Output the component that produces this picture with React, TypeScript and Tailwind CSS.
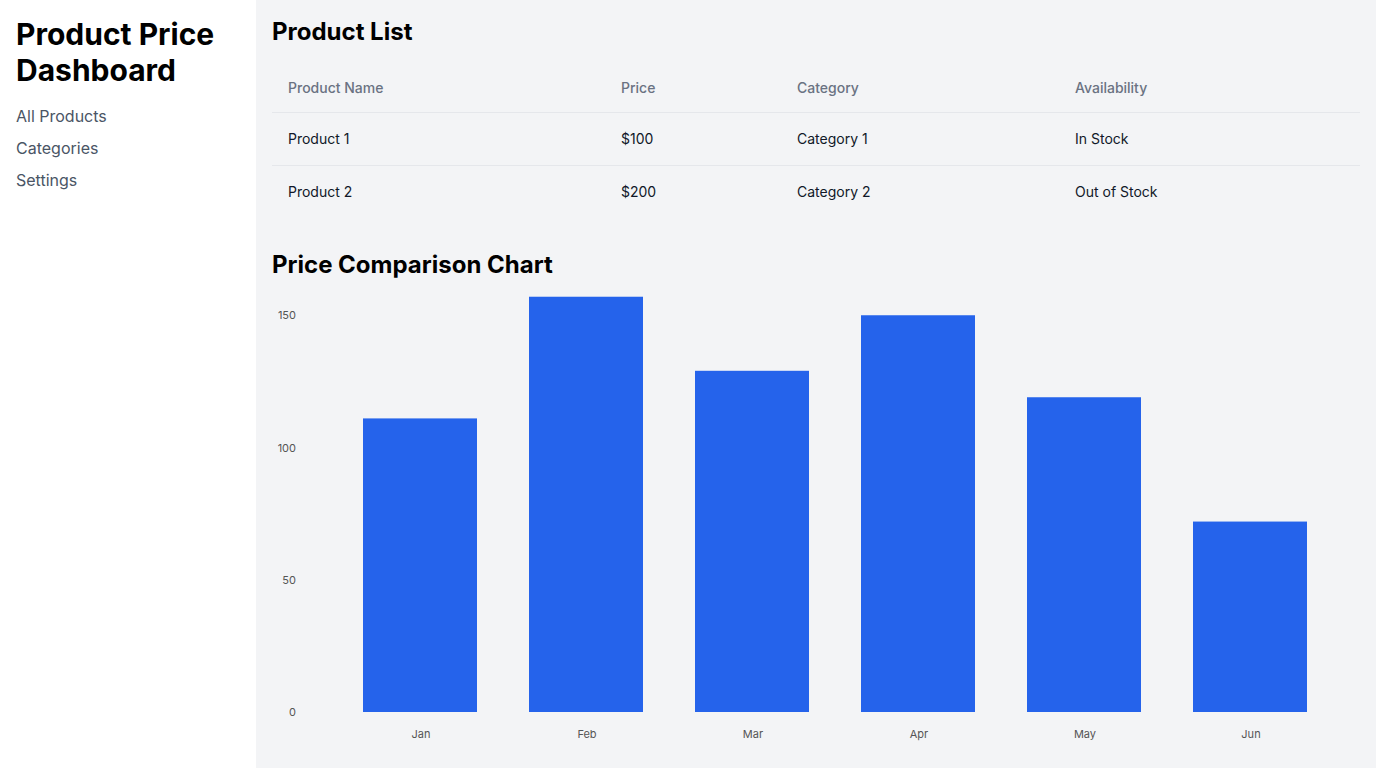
const products = [
  { name: 'Product 1', price: '$100', category: 'Category 1', availability: 'In Stock' },
  { name: 'Product 2', price: '$200', category: 'Category 2', availability: 'Out of Stock' },
];

const chartData = [
  { month: 'Jan', price: 111 },
  { month: 'Feb', price: 157 },
  { month: 'Mar', price: 129 },
  { month: 'Apr', price: 150 },
  { month: 'May', price: 119 },
  { month: 'Jun', price: 72 },
];

function PriceChart() {
  const width = 1088;
  const height = 470;
  const baseY = 423;
  const scale = 2.645;
  const left = 65;
  const band = 166;
  const barWidth = 114;

  return (
    <svg width={width} height={height} viewBox={`0 0 ${width} ${height}`} className="block">
      {[0, 50, 100, 150].map((t) => (
        <text
          key={t}
          x={24}
          y={baseY - t * scale + 1}
          textAnchor="end"
          dominantBaseline="middle"
          fontSize="11"
          fill="#555"
        >
          {t}
        </text>
      ))}
      {chartData.map((d, i) => {
        const x = left + i * band + (band - barWidth) / 2;
        const h = d.price * scale;
        return (
          <g key={d.month}>
            <rect x={x} y={baseY - h} width={barWidth} height={h} fill="#2563eb" />
            <text
              x={left + i * band + band / 2 + 1}
              y={446}
              textAnchor="middle"
              dominantBaseline="middle"
              fontSize="11"
              fill="#555"
            >
              {d.month}
            </text>
          </g>
        );
      })}
    </svg>
  );
}

export default function App() {
  return (
    <div className="flex h-[768px] overflow-hidden font-['Inter',sans-serif]">
      <aside className="w-64 shrink-0 bg-white p-4">
        <h1 className="mb-4 text-3xl font-bold text-black">Product Price Dashboard</h1>
        <nav className="flex flex-col gap-2">
          <a className="text-base text-gray-600">All Products</a>
          <a className="text-base text-gray-600">Categories</a>
          <a className="text-base text-gray-600">Settings</a>
        </nav>
      </aside>

      <main className="flex-1 bg-gray-100 p-4">
        <h2 className="mb-4 text-2xl font-bold text-black">Product List</h2>
        <table className="mb-[31px] w-full text-left text-sm">
          <thead>
            <tr className="border-b border-gray-200">
              <th className="w-[333px] px-4 py-3.5 font-medium text-gray-500">Product Name</th>
              <th className="w-[176px] px-4 py-3.5 font-medium text-gray-500">Price</th>
              <th className="w-[278px] px-4 py-3.5 font-medium text-gray-500">Category</th>
              <th className="px-4 py-3.5 font-medium text-gray-500">Availability</th>
            </tr>
          </thead>
          <tbody>
            {products.map((p, i) => (
              <tr key={p.name} className={i < products.length - 1 ? 'border-b border-gray-200' : ''}>
                <td className="px-4 py-4 text-gray-900">{p.name}</td>
                <td className="px-4 py-4 text-gray-900">{p.price}</td>
                <td className="px-4 py-4 text-gray-900">{p.category}</td>
                <td className="px-4 py-4 text-gray-900">{p.availability}</td>
              </tr>
            ))}
          </tbody>
        </table>

        <h2 className="mb-2 text-2xl font-bold text-black">Price Comparison Chart</h2>
        <PriceChart />
      </main>
    </div>
  );
}
